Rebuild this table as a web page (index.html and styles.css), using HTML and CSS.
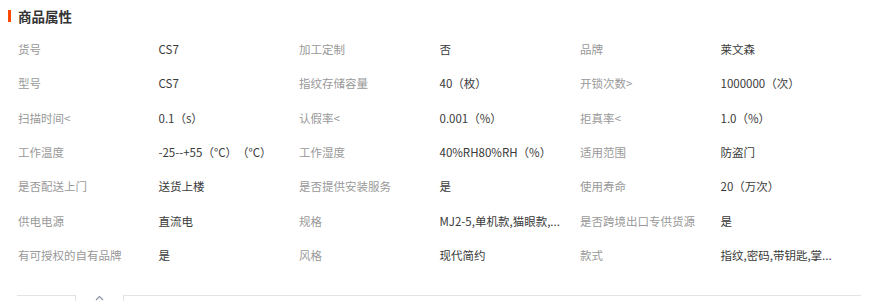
FILE: index.html
```html
<!DOCTYPE html>
<html lang="zh">
<head>
<meta charset="utf-8">
<link rel="stylesheet" href="styles.css">
</head>
<body>
<div class="section">
  <div class="header">
    <span class="bar"></span>
    <h2 class="title">商品属性</h2>
  </div>
  <div class="grid">
    <div class="lbl">货号</div><div class="val">CS7</div>
    <div class="lbl">加工定制</div><div class="val">否</div>
    <div class="lbl">品牌</div><div class="val">莱文森</div>

    <div class="lbl">型号</div><div class="val">CS7</div>
    <div class="lbl">指纹存储容量</div><div class="val">40（枚）</div>
    <div class="lbl">开锁次数&gt;</div><div class="val">1000000（次）</div>

    <div class="lbl">扫描时间&lt;</div><div class="val">0.1（s）</div>
    <div class="lbl">认假率&lt;</div><div class="val">0.001（%）</div>
    <div class="lbl">拒真率&lt;</div><div class="val">1.0（%）</div>

    <div class="lbl">工作温度</div><div class="val">-25--+55（°C）（°C）</div>
    <div class="lbl">工作湿度</div><div class="val">40%RH80%RH（%）</div>
    <div class="lbl">适用范围</div><div class="val">防盗门</div>

    <div class="lbl">是否配送上门</div><div class="val">送货上楼</div>
    <div class="lbl">是否提供安装服务</div><div class="val">是</div>
    <div class="lbl">使用寿命</div><div class="val">20（万次）</div>

    <div class="lbl">供电电源</div><div class="val">直流电</div>
    <div class="lbl">规格</div><div class="val">MJ2-5,单机款,猫眼款,...</div>
    <div class="lbl">是否跨境出口专供货源</div><div class="val">是</div>

    <div class="lbl">有可授权的自有品牌</div><div class="val">是</div>
    <div class="lbl">风格</div><div class="val">现代简约</div>
    <div class="lbl">款式</div><div class="val">指纹,密码,带钥匙,掌...</div>
  </div>
  <div class="footer">
    <div class="tab-left"></div>
    <div class="caret">
      <svg width="9" height="6" viewBox="0 0 9 6"><polyline points="1,5 4.5,1.5 8,5" fill="none" stroke="#8a94a6" stroke-width="1.2"/></svg>
    </div>
    <div class="tab-right"></div>
  </div>
</div>
</body>
</html>
```
FILE: styles.css
```css
html, body {
  margin: 0;
  padding: 0;
  background: #fff;
}
body {
  font-family: "Noto Sans CJK SC", "Liberation Sans", sans-serif;
  color: #333;
  width: 882px;
  height: 301px;
  overflow: hidden;
  text-spacing-trim: space-all;
}
.header {
  display: flex;
  align-items: center;
  height: 16px;
  padding: 8px 0 8px 8px;
}
.bar {
  width: 3px;
  height: 12px;
  background: #ff4a00;
  margin-right: 7px;
}
.title {
  margin: 0;
  font-size: 13.5px;
  line-height: 16px;
  font-weight: bold;
  color: #333;
}
.grid {
  display: grid;
  grid-template-columns: repeat(6, 140.5px);
  grid-auto-rows: 34.33px;
  margin-left: 18px;
  font-size: 11.5px;
}
.lbl, .val {
  white-space: nowrap;
  line-height: 34.33px;
}
.lbl {
  color: #999;
}
.val {
  color: #3a3a3a;
}
.footer {
  display: flex;
  margin-top: 23px;
  margin-left: 17px;
  width: 844px;
  height: 10px;
}
.tab-left {
  width: 58px;
  border-top: 1px solid #e3e3e3;
  border-right: 1px solid #e3e3e3;
}
.caret {
  width: 47px;
  display: flex;
  justify-content: center;
  height: 6px;
}
.caret svg {
  display: block;
}
.tab-right {
  flex: 1;
  border-top: 1px solid #e3e3e3;
  border-left: 1px solid #e3e3e3;
}
```
